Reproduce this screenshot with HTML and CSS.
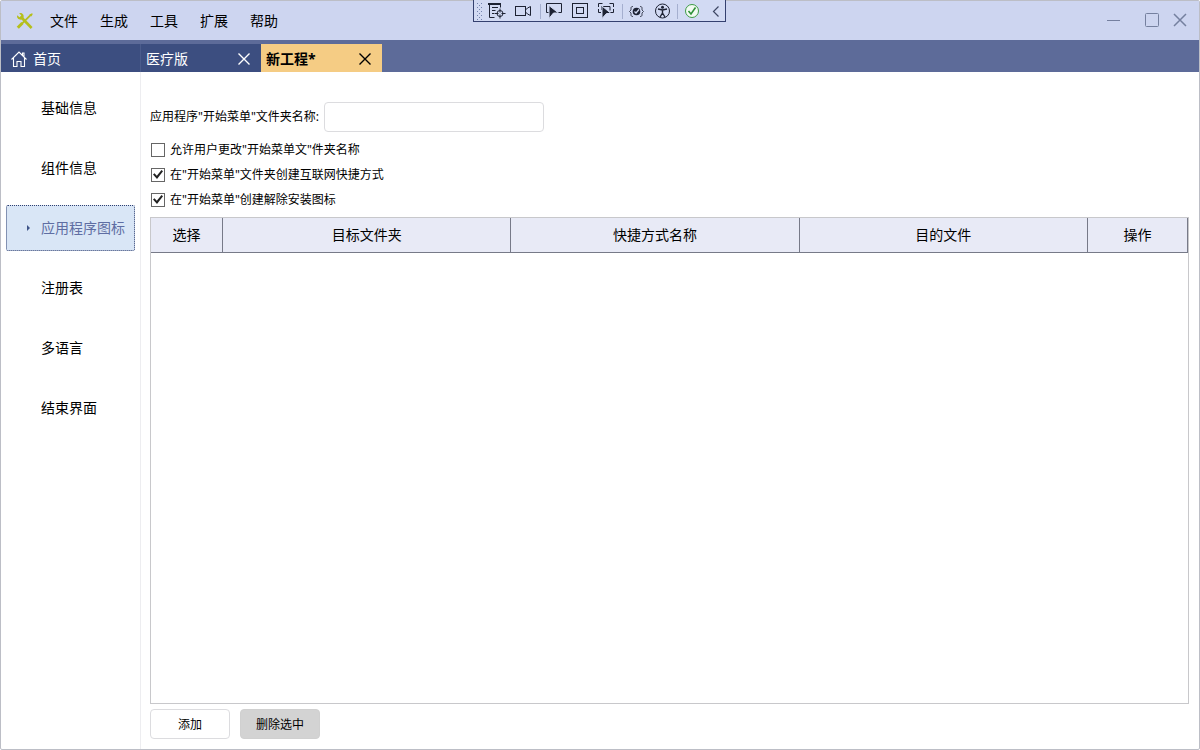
FILE: index.html
```html
<!DOCTYPE html>
<html lang="zh-CN">
<head>
<meta charset="utf-8">
<title>新工程</title>
<link rel="stylesheet" href="styles.css">
</head>
<body>
<div class="window">
  <header class="titlebar">
    <svg class="logo" viewBox="0 0 18 18" aria-hidden="true">
      <path d="M14.8 2.8 5 12.6" stroke="#b5bf1c" stroke-width="1.8"/>
      <path d="M6.4 11 1.800 15.800" stroke="#b5bf1c" stroke-width="3"/>
      <path d="M5 5 15.6 16" stroke="#b5bf1c" stroke-width="2.6"/>
      <path d="M1.200 3.200 3.500 5.300 5.300 3.600 3.200 1.200C5.800.4 8.200 2.400 7.600 5.400L5.600 7.600C2.600 8 .4 5.800 1.200 3.200z" fill="#b5bf1c"/>
      <path d="M13.400 2.600 16 1.200 16.800 2 15.400 4.600z" fill="#b5bf1c"/>
    </svg>
    <nav class="menu">
      <button type="button">文件</button>
      <button type="button">生成</button>
      <button type="button">工具</button>
      <button type="button">扩展</button>
      <button type="button">帮助</button>
    </nav>
    <div class="window-buttons">
      <button type="button" aria-label="最小化"><svg width="14" height="16" viewBox="0 0 14 16"><path d="M0 7.500h13"/></svg></button>
      <button type="button" aria-label="最大化"><svg width="14" height="16" viewBox="0 0 14 16"><rect x=".5" y=".5" width="13" height="13" rx="1"/></svg></button>
      <button type="button" aria-label="关闭"><svg width="14" height="16" viewBox="0 0 14 16"><path d="M1 1l12 12M13 1 1 13" stroke-width="1.5"/></svg></button>
    </div>
  </header>

  <div class="debugbar">
    <svg width="253" height="22" viewBox="0 0 253 22" aria-hidden="true">
      <rect class="frame" x=".5" y="-.5" width="252" height="22"/>
      <g class="grip">
        <path d="M4.500 3v17M8.500 3v17"/>
        <path d="M6.500 5v15"/>
      </g>
      <path class="sep" d="M67.500 4v15M149.500 4v15M204.500 4v15"/>
      <g class="ink">
        <path d="M15 4h13" stroke-width="2"/>
        <path d="M16.500 5v12.500h5M27.500 5v2.500M19 7.500h6M19 10.500h3.500M19 13.500h2"/>
        <circle cx="27" cy="13.500" r="3"/>
        <path d="M27 8.500v4M27 14.500v4M21.500 13.500h4M28.500 13.500h4"/>
        <rect x="42.500" y="6.500" width="10" height="9"/>
        <path d="M52.500 10l2-2 3-1.500v9l-3-1.500-2-2"/>
        <path d="M76 12.500h-2.500v-9h15v9H85"/>
        <rect x="99.500" y="3.500" width="15" height="14"/>
        <rect x="103.500" y="7.500" width="7" height="6"/>
        <path d="M125.500 7V3.500h4M136.500 3.500h4V7M140.500 9v3.500h-4M125.500 9v3.500h2.500M129 6.500h8v4M128.500 6v4"/>
        <path d="M160 6.500c-1.500 0-2 .5-2 1.500v2l-1.500 1.500L158 13v2c0 1 .5 1.500 2 1.500M167 6.500c1.500 0 2 .5 2 1.500v2l1.500 1.500L169 13v2c0 1-.5 1.500-2 1.500" stroke-width=".8"/>
        <circle cx="189.500" cy="11" r="7"/>
        <path d="M185 9l4.500 1 4.500-1M189.500 10v3l-2.500 4M189.500 13l2.500 4" stroke-width="1.400"/>
      </g>
      <g class="solid">
        <path class="cursor" d="M76 5.500l9.500 7.500h-5L76 18.500z"/>
        <path class="cursor" d="M129 6l9 7.500h-4.500L129 18.500z"/>
        <circle cx="163.500" cy="11.500" r="3.800"/>
        <circle cx="189.500" cy="7.200" r="1.500"/>
      </g>
      <path class="knockout" d="M161.500 11.500l1.500 1.500 3-3.500"/>
      <circle class="ok" cx="219" cy="11" r="6.500"/>
      <path class="tick" d="M215.500 11l2.500 3 4.500-6.500"/>
      <path class="chevron" d="M245.500 6.500l-5 5 5 5"/>
    </svg>
  </div>

  <div class="tabs">
    <div class="tab tab-home">
      <svg class="home" width="16" height="16" viewBox="0 0 16 16" aria-hidden="true"><path d="M.5 8.500 8 1l7.500 7.500M2.500 7v8.500h3.500v-5h4v5h3.500V7M11.500 4.500V2h1.500v4"/></svg>
      <span>首页</span>
    </div>
    <div class="tab">
      <span>医疗版</span>
      <button type="button" aria-label="关闭 医疗版"><svg width="12" height="12" viewBox="0 0 12 12"><path d="M.5.5l11 11M11.500.5l-11 11"/></svg></button>
    </div>
    <div class="tab tab-active">
      <span>新工程*</span>
      <button type="button" aria-label="关闭 新工程"><svg width="12" height="12" viewBox="0 0 12 12"><path d="M.5.5l11 11M11.500.5l-11 11"/></svg></button>
    </div>
  </div>

  <div class="body">
    <nav class="sidebar">
      <a href="#basic">基础信息</a>
      <a href="#components">组件信息</a>
      <a href="#icons" class="current" aria-current="page">应用程序图标</a>
      <a href="#registry">注册表</a>
      <a href="#languages">多语言</a>
      <a href="#finish">结束界面</a>
    </nav>

    <main class="content">
      <div class="field">
        <label for="folder">应用程序"开始菜单"文件夹名称:</label>
        <input type="text" id="folder">
      </div>
      <label class="check"><input type="checkbox"><span>允许用户更改"开始菜单文"件夹名称</span></label>
      <label class="check"><input type="checkbox" checked><span>在"开始菜单"文件夹创建互联网快捷方式</span></label>
      <label class="check"><input type="checkbox" checked><span>在"开始菜单"创建解除安装图标</span></label>

      <div class="grid">
        <table>
          <colgroup><col class="col-select"><col><col><col><col class="col-action"></colgroup>
          <thead>
            <tr><th>选择</th><th>目标文件夹</th><th>快捷方式名称</th><th>目的文件</th><th>操作</th></tr>
          </thead>
        </table>
      </div>

      <div class="actions">
        <button type="button">添加</button>
        <button type="button" class="remove">删除选中</button>
      </div>
    </main>
  </div>
</div>
</body>
</html>
```
FILE: styles.css
```css
* {
  box-sizing: border-box;
}

body {
  margin: 0;
  background: #fff;
  color: #000;
  font: 14px/20px "Noto Sans", "Noto Sans CJK SC", sans-serif;
}

button,
input {
  font: inherit;
  color: inherit;
}

button {
  padding: 0;
  border: 0;
  background: none;
}

svg {
  display: block;
  fill: none;
}

.window {
  position: relative;
  display: flex;
  flex-direction: column;
  min-height: 100vh;
  border: 1px solid #bcbec6;
  border-radius: 2px;
}

.titlebar {
  display: flex;
  align-items: center;
  height: 39px;
  padding: 0 12px 0 15px;
  background: #cdd5f0;
}

.logo {
  width: 18px;
  height: 18px;
}

.menu {
  display: flex;
  gap: 22px;
  margin-left: 16px;
}

.window-buttons {
  display: flex;
  gap: 14px;
  margin-left: auto;
}

.window-buttons svg {
  stroke: #75809f;
}

.window-buttons button:first-child {
  margin-right: 10px;
}

.debugbar {
  position: absolute;
  top: -1px;
  left: 472px;
}

.frame {
  fill: #d2daf3;
  stroke: #34406f;
}

.grip {
  stroke: #7483ae;
  stroke-dasharray: 1 3;
}

.sep {
  stroke: #a5afcf;
}

.ink {
  stroke: #1d2233;
}

.solid {
  fill: #1d2233;
}

.cursor {
  stroke: #d2daf3;
}

.knockout {
  stroke: #d2daf3;
  stroke-width: 1.2;
}

.ok {
  fill: #f1faf2;
  stroke: #3c9b45;
}

.tick {
  stroke: #2f9139;
  stroke-width: 1.6;
}

.chevron {
  stroke: #3d4663;
  stroke-width: 1.2;
}

.tabs {
  display: flex;
  height: 32px;
  padding-top: 4px;
  background: #5d6b99;
}

.tab {
  display: flex;
  align-items: center;
  justify-content: space-between;
  width: 120px;
  padding: 2px 11px 0 5px;
  background: #3c4e80;
  color: #fff;
}

.tab svg {
  stroke: currentColor;
  stroke-width: 1.4;
}

.tab-home {
  justify-content: flex-start;
  gap: 6px;
  width: 140px;
  padding-left: 10px;
  border-right: 1px solid #4b5c8c;
}

.tab .home {
  stroke-width: 1.1;
}

.tab-active {
  width: 121px;
  background: #f5cc84;
  color: #000;
  font-weight: bold;
}

.body {
  display: flex;
  flex: 1;
}

.sidebar {
  display: flex;
  flex-direction: column;
  flex: none;
  gap: 14px;
  width: 140px;
  padding: 13px 5px;
  border-right: 1px solid #ededf0;
}

.sidebar a {
  display: flex;
  align-items: center;
  height: 46px;
  padding-left: 34px;
  border: 1px solid transparent;
  border-radius: 2px;
  color: #000;
  text-decoration: none;
}

.sidebar .current {
  padding-left: 20px;
  border: 1px dotted #2f3f70;
  background: #d9e6f6;
  color: #5f6ea3;
}

.sidebar .current::before {
  content: "";
  width: 0;
  margin-right: 11px;
  border: 3px solid transparent;
  border-left-color: #3f5488;
  border-right-width: 0;
}

.content {
  display: flex;
  flex: 1;
  flex-direction: column;
  min-width: 0;
  padding: 30px 10px 10px 9px;
  font-size: 12px;
}

.field {
  display: flex;
  align-items: center;
  gap: 5px;
  margin-bottom: 5px;
}

.field input {
  width: 220px;
  height: 30px;
  padding: 0 8px;
  border: 1px solid #dcdcdf;
  border-radius: 4px;
  background: #fff;
}

.check {
  display: flex;
  align-items: center;
  gap: 5px;
  height: 25px;
  padding-left: 1px;
}

.check input {
  appearance: none;
  display: grid;
  place-items: center;
  width: 14px;
  height: 14px;
  margin: 0;
  border: 1px solid #666;
  background: #fff;
}

.check input:checked::before {
  content: "";
  width: 10px;
  height: 9px;
  background: #222;
  clip-path: polygon(0 50%, 15% 35%, 38% 65%, 85% 0, 100% 14%, 40% 100%);
}

.grid {
  flex: 1;
  margin-top: 5px;
  border: 1px solid #c8c8cb;
}

.grid table {
  width: 100%;
  border-collapse: separate;
  border-spacing: 0;
  table-layout: fixed;
}

.col-select {
  width: 72px;
}

.col-action {
  width: 100px;
}

.grid th {
  height: 35px;
  padding: 0;
  border-right: 1px solid #777a88;
  border-bottom: 1px solid #777a88;
  background: #e8eaf6;
  font-size: 14px;
  font-weight: normal;
}

.actions {
  display: flex;
  gap: 10px;
  margin-top: 5px;
}

.actions button {
  width: 80px;
  height: 30px;
  padding-top: 2px;
  border: 1px solid #dcdcdf;
  border-radius: 4px;
  background: #fff;
}

.actions .remove {
  border-color: #d0d0d0;
  background: #d3d3d3;
}
```
